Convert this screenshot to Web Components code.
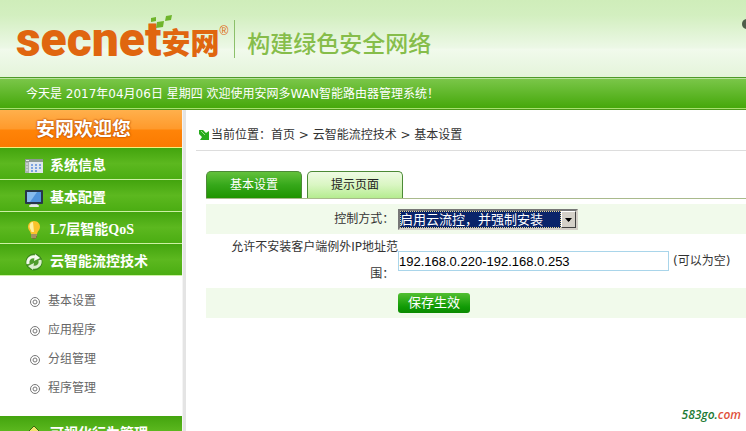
<!DOCTYPE html>
<html lang="zh-CN">
<head>
<meta charset="utf-8">
<title>安网智能路由器</title>
<style>
  html, body {
    height: 100%;
  }
  body {
    margin: 0;
    overflow: hidden;
    background: #fff;
    color: #333;
    font-family: "DejaVu Sans", "Noto Sans CJK SC", sans-serif;
    font-size: 12px;
    line-height: 18px;
  }
</style>
</head>
<body>
<router-page>
  <site-header slot="header"></site-header>
  <welcome-bar slot="header">今天是 2017年04月06日 星期四 欢迎使用安网多WAN智能路由器管理系统！</welcome-bar>
  <side-menu slot="menu">
    <span slot="title">安网欢迎您</span>
    <menu-item icon="table">系统信息</menu-item>
    <menu-item icon="monitor">基本配置</menu-item>
    <menu-item icon="bulb">L7层智能QoS</menu-item>
    <menu-item icon="recycle">云智能流控技术</menu-item>
    <sub-menu>
      <sub-item>基本设置</sub-item>
      <sub-item>应用程序</sub-item>
      <sub-item>分组管理</sub-item>
      <sub-item>程序管理</sub-item>
    </sub-menu>
    <menu-item icon="up">可视化行为管理</menu-item>
  </side-menu>
  <bread-crumb>当前位置：首页 &gt; 云智能流控技术 &gt; 基本设置</bread-crumb>
  <tab-bar>
    <tab-button active>基本设置</tab-button>
    <tab-button>提示页面</tab-button>
  </tab-bar>
  <flow-form></flow-form>
  <site-mark slot="mark"></site-mark>
</router-page>

<script>
const icons = {
  table: `<svg width="18" height="16" viewBox="0 0 18 16">
    <rect x="0" y="1" width="18" height="14" fill="#dfe6ee"/>
    <rect x="0" y="1" width="18" height="3" fill="#8d9a94"/>
    <rect x="1" y="2" width="3" height="1" fill="#e8efe8"/>
    <rect x="0" y="4" width="4" height="11" fill="#a9b4b0"/>
    <path d="M1 6h2M1 9h2M1 12h2" stroke="#e6ece8"/>
    <path d="M6 7h2M10 7h2M14 7h2M6 10h2M10 10h2M14 10h2M6 13h2M10 13h2" stroke="#7ba2e0" stroke-width="2"/>
  </svg>`,
  monitor: `<svg width="18" height="17" viewBox="0 0 18 17">
    <path d="M6 13h6l1 3H5z" fill="#c9d0d6"/>
    <rect x="4" y="15" width="10" height="2" rx="1" fill="#e4e8ea"/>
    <rect x="0" y="0" width="18" height="14" rx="1" fill="#27364a"/>
    <rect x="2" y="2" width="14" height="10" fill="#4f93dc"/>
    <path d="M2 2h10L5 12H2z" fill="#86bbee"/>
  </svg>`,
  bulb: `<svg width="18" height="18" viewBox="0 0 18 18">
    <path d="M9 0C5 0 3 3 3 6c0 3 2.500 4 3 7h6c.5-3 3-4 3-7 0-3-2-6-6-6z" fill="#fbc32a"/>
    <path d="M8 1C6 1 4.500 3 4.500 5.500c0 2 1.500 3 2 5.500H9z" fill="#fff0a0"/>
    <path d="M6 13h6v3l-2 2H8l-2-2z" fill="#7d6a3c"/>
    <path d="M6 14h6M6 16h5" stroke="#cdbb82"/>
  </svg>`,
  recycle: `<svg width="18" height="18" viewBox="0 0 18 18">
    <circle cx="9" cy="9" r="8" fill="#4f9c2c" stroke="#3b8420"/>
    <path d="M3 11C2 6 6 3 10 4" fill="none" stroke="#f4faee" stroke-width="3"/>
    <path d="M10 1l5 4-6 3z" fill="#f4faee"/>
    <path d="M15 7c1 5-3 8-7 7" fill="none" stroke="#dcefcf" stroke-width="3"/>
    <path d="M8 17l-5-4 6-3z" fill="#dcefcf"/>
  </svg>`,
  up: `<svg width="18" height="18" viewBox="0 0 18 18">
    <path d="M9 1l8 8h-4v8H5V9H1z" fill="#f0e46a" stroke="#39680f"/>
  </svg>`
};

class RouterPage extends HTMLElement {
  constructor() {
    super();
    const shadow = this.attachShadow({ mode: "open" });
    shadow.innerHTML = `
      <style>
        :host {
          display: flex;
          flex-direction: column;
          height: 100%;
        }
        .columns {
          display: flex;
          flex: 1;
          min-height: 0;
        }
        aside {
          flex: none;
          border-right: 3px solid #e4e4e4;
        }
        main {
          flex: 1;
          min-width: 0;
        }
      </style>
      <slot name="header"></slot>
      <div class="columns">
        <aside><slot name="menu"></slot></aside>
        <main><slot></slot></main>
      </div>
      <slot name="mark"></slot>
    `;
  }
}

class SiteHeader extends HTMLElement {
  constructor() {
    super();
    const shadow = this.attachShadow({ mode: "open" });
    shadow.innerHTML = `
      <style>
        :host {
          display: flex;
          justify-content: space-between;
          height: 77px;
          flex: none;
          background: linear-gradient(#cfedba, #d3efc0 20%, #ecf8e6 62%, #f1faec 64%, #e4f4da);
        }
        .brand {
          display: flex;
          align-items: center;
          padding: 0 0 0 16px;
        }
        .logo {
          position: relative;
          display: flex;
          align-items: center;
          padding-top: 2px;
          color: #e0660f;
        }
        .latin {
          font: 900 48px/48px Roboto, sans-serif;
        }
        .cn {
          font: 900 29px/48px "Noto Sans CJK SC", sans-serif;
          padding-top: 3px;
        }
        sup {
          align-self: flex-start;
          padding-top: 8px;
          font: 12px/18px "Liberation Sans", sans-serif;
        }
        .leaf {
          position: absolute;
          left: 134px;
          top: 3px;
        }
        .slogan {
          margin: 0 0 0 6px;
          padding: 6px 0 0 12px;
          border-left: 1px solid #8cc06a;
          color: #86bd4a;
          font: 500 23px/32px "Noto Sans CJK SC", sans-serif;
        }
        .phone {
          margin-top: 19px;
        }
      </style>
      <div class="brand">
        <div class="logo">
          <span class="latin">secnet</span><span class="cn">安网</span><sup>®</sup>
          <svg class="leaf" width="22" height="14" viewBox="0 0 22 14">
            <path d="M1 3l5-1v4L1 7z M7 7l7-1-1 6-7 1z M16 1l6-1-1 5-6 1z" fill="#6fb52c"/>
          </svg>
        </div>
        <div class="slogan">构建绿色安全网络</div>
      </div>
      <svg class="phone" width="4" height="10" viewBox="0 0 4 10">
        <path d="M4 0Q0 1 0 5t4 5z" fill="#4e5f4a"/>
      </svg>
    `;
  }
}

class WelcomeBar extends HTMLElement {
  constructor() {
    super();
    const shadow = this.attachShadow({ mode: "open" });
    shadow.innerHTML = `
      <style>
        :host {
          display: block;
          flex: none;
          padding: 1px 0 0 26px;
          border-top: 1px solid #4f9a2a;
          border-bottom: 1px solid #4d9a1c;
          box-shadow: inset 0 1px #b9e39c, inset 0 -1px #a8e070;
          background: linear-gradient(#7cc74b, #43a708);
          color: #fff;
          line-height: 30px;
          white-space: nowrap;
        }
      </style>
      <slot></slot>
    `;
  }
}

class SideMenu extends HTMLElement {
  constructor() {
    super();
    const shadow = this.attachShadow({ mode: "open" });
    shadow.innerHTML = `
      <style>
        :host {
          display: block;
          width: 182px;
          border-right: 1px solid #f4f4f4;
        }
        h2 {
          margin: 0;
          padding: 2px 0 0 36px;
          border-bottom: 1px solid #f4f07a;
          background: linear-gradient(#ffb04c, #ff9a2c 50%, #ff8408 55%, #fb7a00);
          color: #fff;
          font-size: 19px;
          line-height: 35px;
          text-shadow: 0 0 2px #b84a00, 0 0 2px #b84a00;
        }
      </style>
      <h2><slot name="title"></slot></h2>
      <nav><slot></slot></nav>
    `;
  }
}

class MenuItem extends HTMLElement {
  constructor() {
    super();
    const shadow = this.attachShadow({ mode: "open" });
    shadow.innerHTML = `
      <style>
        :host {
          display: block;
          border-bottom: 1px solid #cdf0a4;
          background: linear-gradient(#43a40e, #5cb81f 50%, #4bad12);
        }
        a {
          display: flex;
          align-items: center;
          gap: 7px;
          padding: 5px 0 0 25px;
          color: #fff;
          font: bold 14px/26px "Liberation Serif", "Noto Sans CJK SC", serif;
          text-decoration: none;
          white-space: nowrap;
        }
      </style>
      <a href="#">${icons[this.getAttribute("icon")]}<slot></slot></a>
    `;
  }
}

class SubMenu extends HTMLElement {
  constructor() {
    super();
    const shadow = this.attachShadow({ mode: "open" });
    shadow.innerHTML = `
      <style>
        :host {
          display: block;
          padding: 11px 0 13px;
        }
      </style>
      <slot></slot>
    `;
  }
}

class SubItem extends HTMLElement {
  constructor() {
    super();
    const shadow = this.attachShadow({ mode: "open" });
    shadow.innerHTML = `
      <style>
        :host {
          display: block;
        }
        a {
          display: flex;
          align-items: center;
          gap: 8px;
          padding-left: 30px;
          color: #666;
          line-height: 29px;
          text-decoration: none;
        }
      </style>
      <a href="#">
        <svg width="10" height="10" viewBox="0 0 10 10" fill="none" stroke="#777">
          <circle cx="5" cy="5" r="4.500"/>
          <circle cx="5" cy="5" r="2"/>
        </svg>
        <slot></slot>
      </a>
    `;
  }
}

class BreadCrumb extends HTMLElement {
  constructor() {
    super();
    const shadow = this.attachShadow({ mode: "open" });
    shadow.innerHTML = `
      <style>
        :host {
          display: flex;
          align-items: center;
          gap: 2px;
          margin-left: 10px;
          padding: 16px 0 6px 3px;
          border-bottom: 1px solid #ddd;
        }
      </style>
      <svg width="10" height="10" viewBox="0 0 10 10">
        <path d="M0 0h4l3 3 3-2v9H1l2-3-3-3z" fill="#27ab1d"/>
        <path d="M2 1l4 4" stroke="#9be08c"/>
      </svg>
      <span><slot></slot></span>
    `;
  }
}

class TabBar extends HTMLElement {
  constructor() {
    super();
    const shadow = this.attachShadow({ mode: "open" });
    shadow.innerHTML = `
      <style>
        :host {
          display: flex;
          gap: 5px;
          margin: 20px 0 0 20px;
          border-bottom: 1px solid #a9ba8c;
        }
      </style>
      <slot></slot>
    `;
  }
}

class TabButton extends HTMLElement {
  constructor() {
    super();
    const shadow = this.attachShadow({ mode: "open" });
    shadow.innerHTML = `
      <style>
        :host {
          display: block;
        }
        button {
          display: block;
          width: 96px;
          padding: 0;
          border: 1px solid #4c8a36;
          border-bottom: 0;
          border-radius: 5px 5px 0 0;
          background: linear-gradient(#effbe4, #d9f6c2 50%, #b5ec90);
          color: #222;
          font: inherit;
          line-height: 26px;
        }
        :host([active]) button {
          background: linear-gradient(#63c13c, #36a81a 50%, #1f9400);
          color: #fff;
        }
      </style>
      <button type="button"><slot></slot></button>
    `;
  }
}

class FlowForm extends HTMLElement {
  constructor() {
    super();
    const shadow = this.attachShadow({ mode: "open" });
    shadow.innerHTML = `
      <style>
        :host {
          display: block;
          margin: 5px 0 0 20px;
        }
        .row {
          display: grid;
          grid-template-columns: 192px 1fr;
          align-items: center;
          min-height: 30px;
        }
        .row.tint {
          background: #f1faeb;
        }
        .label {
          padding-left: 8px;
          line-height: 27px;
          text-align: right;
        }
        .field {
          display: flex;
          align-items: center;
          gap: 4px;
        }
        select, input, button {
          box-sizing: border-box;
          margin: 0;
          font: 13px/18px "Liberation Sans", "Noto Sans CJK SC", sans-serif;
        }
        .select {
          display: flex;
          width: 180px;
          height: 21px;
          box-sizing: border-box;
          border: 2px solid #777;
          border-right-color: #d4d0c8;
          border-bottom-color: #d4d0c8;
          background: #fff;
        }
        select {
          flex: 1;
          min-width: 0;
          padding: 0;
          border: 0;
          border-radius: 0;
          outline: 1px dotted #e8d890;
          outline-offset: -1px;
          background: #0a246a;
          color: #fff;
          line-height: 17px;
          appearance: none;
        }
        .arrow {
          display: block;
          border: 1px solid;
          border-color: #fff #404040 #404040 #fff;
          background: #d4d0c8;
        }
        input {
          width: 271px;
          height: 20px;
          padding: 0;
          border: 1px solid #a9d5ea;
          background: #fff;
          color: #000;
        }
        button {
          width: 72px;
          padding: 1px 0;
          border: 0;
          border-radius: 3px;
          background: linear-gradient(#52bf31, #109a05 70%, #0a8a00);
          color: #fff;
        }
      </style>
      <form>
        <div class="row tint">
          <label class="label" for="mode">控制方式：&nbsp;</label>
          <div class="field">
            <div class="select">
              <select id="mode"><option>启用云流控，并强制安装</option></select>
              <svg class="arrow" width="13" height="15" viewBox="0 0 13 15">
                <path d="M3 6h7L6.500 10z" fill="#000"/>
              </svg>
            </div>
          </div>
        </div>
        <div class="row">
          <label class="label" for="range">允许不安装客户端例外IP地址范围：&nbsp;</label>
          <div class="field">
            <input id="range" type="text" value="192.168.0.220-192.168.0.253">
            <span>(可以为空)</span>
          </div>
        </div>
        <div class="row tint">
          <span></span>
          <div class="field"><button type="button">保存生效</button></div>
        </div>
      </form>
    `;
  }
}

class SiteMark extends HTMLElement {
  constructor() {
    super();
    const shadow = this.attachShadow({ mode: "open" });
    shadow.innerHTML = `
      <style>
        :host {
          position: absolute;
          right: 5px;
          bottom: 7px;
          color: #1d7a35;
          font: italic 600 12px/18px "Open Sans", sans-serif;
        }
        span {
          color: #e0523c;
        }
      </style>
      583go.<span>com</span>
    `;
  }
}

customElements.define("router-page", RouterPage);
customElements.define("site-header", SiteHeader);
customElements.define("welcome-bar", WelcomeBar);
customElements.define("side-menu", SideMenu);
customElements.define("menu-item", MenuItem);
customElements.define("sub-menu", SubMenu);
customElements.define("sub-item", SubItem);
customElements.define("bread-crumb", BreadCrumb);
customElements.define("tab-bar", TabBar);
customElements.define("tab-button", TabButton);
customElements.define("flow-form", FlowForm);
customElements.define("site-mark", SiteMark);
</script>
</body>
</html>
